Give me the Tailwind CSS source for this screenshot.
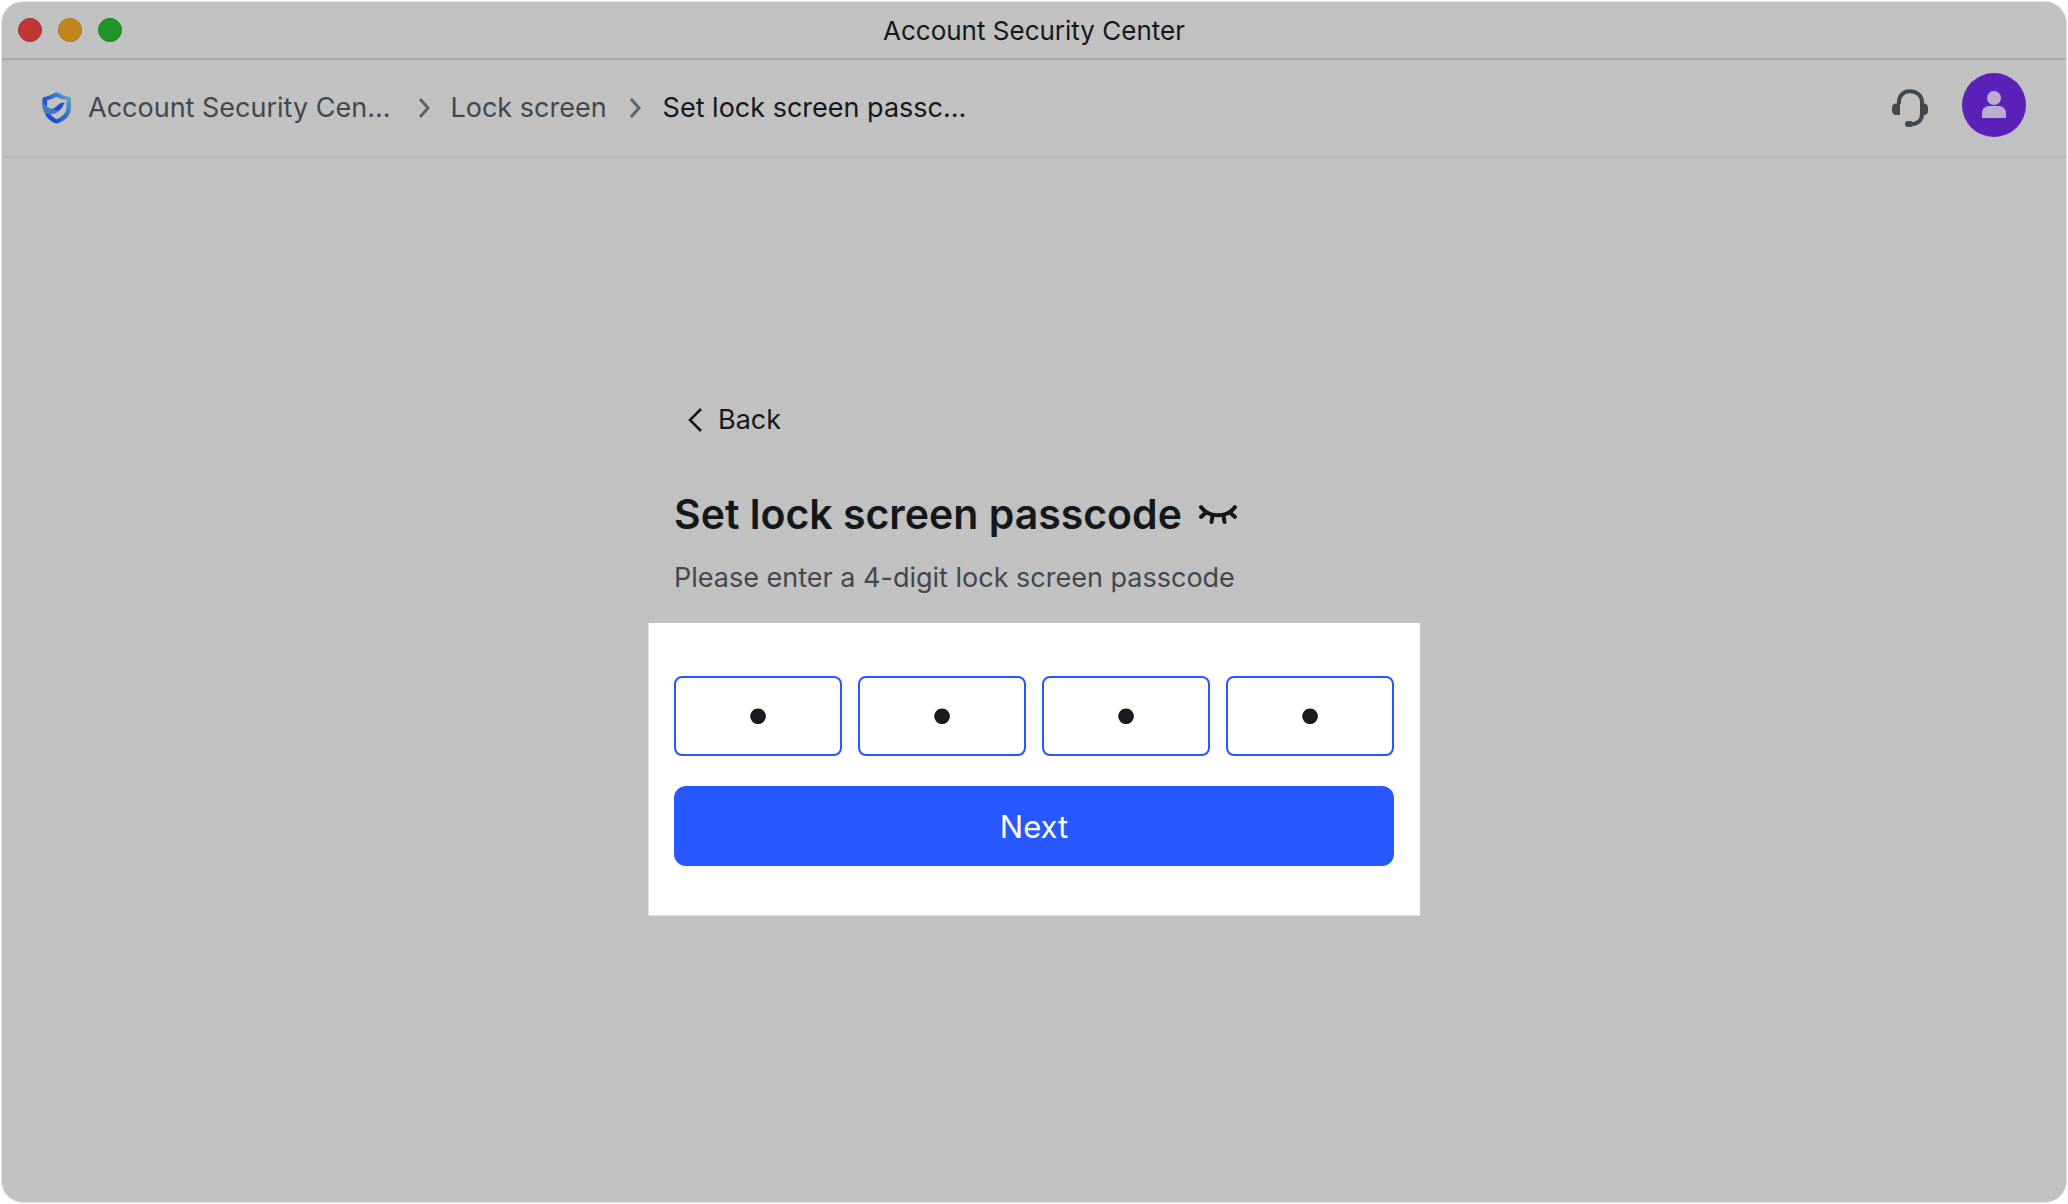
<!DOCTYPE html>
<html lang="en">
<head>
  <meta charset="UTF-8">
  <meta name="viewport" content="width=device-width, initial-scale=1.0">
  <title>Account Security Center</title>
  <script src="https://cdn.jsdelivr.net/npm/@tailwindcss/browser@4"></script>
</head>
<body class="bg-white font-['Inter','Liberation_Sans',sans-serif] text-[#15181b]">

  <!-- App window -->
  <div class="min-h-screen p-px">
    <div class="flex min-h-[calc(100vh-2px)] flex-col overflow-hidden rounded-[22px] border border-[#e4e4e4] bg-[#c1c1c1]">

      <!-- Title bar -->
      <div class="grid h-[58px] grid-cols-[1fr_auto_1fr] items-center border-b-2 border-[#ababab] px-4">
        <div class="flex gap-4">
          <span class="size-6 rounded-full border border-[#a92f30] bg-[#c13738]"></span>
          <span class="size-6 rounded-full border border-[#a5731a] bg-[#c1871d]"></span>
          <span class="size-6 rounded-full border border-[#1c7f22] bg-[#219427]"></span>
        </div>
        <h1 class="pt-0.5 text-[26px] leading-8">Account Security Center</h1>
      </div>

      <!-- Breadcrumb header -->
      <header class="flex h-[98px] items-center justify-between border-b-2 border-[#b8b8b8] px-10">
        <nav aria-label="Breadcrumb" class="flex items-center text-[27px] leading-9 text-[#42474d]">
          <a href="#" class="flex items-center gap-4">
            <svg class="h-8 w-[30px]" viewBox="0 0 30 32" fill="none">
              <defs>
                <linearGradient id="rim" x1="4" y1="8" x2="26" y2="8" gradientUnits="userSpaceOnUse">
                  <stop stop-color="#2355cf"/>
                  <stop offset="1" stop-color="#5aa3c4"/>
                </linearGradient>
                <linearGradient id="side" x1="28" y1="6" x2="11" y2="26" gradientUnits="userSpaceOnUse">
                  <stop stop-color="#5aa3c4"/>
                  <stop offset="1" stop-color="#1d4fcb"/>
                </linearGradient>
              </defs>
              <path d="M29 5V15.500C29 23 24 28 16.500 31Q14.500 31.900 12.500 31C7.500 28.500 4.500 25.500 2.500 21.500L8 21.500C9.500 24 11.500 25.700 14.500 27.200C21 24.500 24.500 20.500 24.500 15V8Z" fill="url(#side)"/>
              <path d="M0.500 14V6.800Q0.500 5.500 1.800 5.200C6 4.300 9.500 3 12.500 1Q14.500 0 16.500 1C20 3 23.500 4.300 27.500 5Q29 5.300 29 6.800V10L24.500 8.200C20.500 7.500 17.500 6.500 14.500 5C11.500 6.500 8.500 7.500 5 8.200V14Z" fill="url(#rim)"/>
              <path d="M0.500 9.500C4 15 8.500 17.500 13 16.500C16 13 18.500 10.500 22.500 11C20 14 18.500 20.500 12 21.800C7 22.700 3 22 2 20Q0.500 17 0.500 14Z" fill="#4878c8"/>
              <path d="M10.500 17C15 15.500 16.500 9.800 22.800 10.800C20.500 13.500 20 18.500 15 19C13 19 11.500 18.200 10.500 17Z" fill="#1d4fcb"/>
            </svg>
            <span>Account Security Cen...</span>
          </a>
          <svg class="mr-3 ml-5 h-6 w-7" viewBox="0 0 28 24" fill="none" stroke="#5c6269" stroke-width="3"><path d="M10 3L18 12L10 21"/></svg>
          <a href="#">Lock screen</a>
          <svg class="mx-3.5 h-6 w-7" viewBox="0 0 28 24" fill="none" stroke="#5c6269" stroke-width="3"><path d="M10 3L18 12L10 21"/></svg>
          <span aria-current="page" class="text-[#15181b]">Set lock screen passc...</span>
        </nav>
        <div class="flex items-center gap-8">
          <button type="button" aria-label="Customer support">
            <svg class="h-10 w-10" viewBox="0 0 40 40" fill="none">
              <path d="M9 16V14C9 7.500 13.500 3.300 20 3.300S32 7.500 32 14V26C32 33 27 36.500 19 36.500" stroke="#42474d" stroke-width="4"/>
              <path d="M10 15.500V27H6C3.500 27 2 25 2 23V20C2 17.500 3.500 15.500 6 15.500Z" fill="#42474d"/>
              <path d="M30 15.500H34C36.500 15.500 38 17.500 38 20V23C38 25 36.500 27 34 27H30Z" fill="#42474d"/>
              <rect x="15" y="33" width="8" height="6" rx="3" fill="#42474d"/>
            </svg>
          </button>
          <button type="button" aria-label="Profile" class="mb-1.5 flex size-16 items-center justify-center rounded-full bg-[#5b21b9]">
            <svg class="h-7 w-6" viewBox="0 0 24 28" fill="#b9add0">
              <circle cx="12" cy="7" r="7"/>
              <path d="M0 27V22C0 18 3 15 7 15H17C21 15 24 18 24 22V26C24 27 24 27 23 27Z"/>
            </svg>
          </button>
        </div>
      </header>

      <!-- Passcode form -->
      <main class="flex flex-col items-center pt-60">
        <div class="w-full max-w-[772px]">
          <div class="px-[26px]">
            <button type="button" class="flex items-center gap-3 pl-3 text-[27px] leading-11">
              <svg class="h-7 w-5" viewBox="0 0 20 28" fill="none" stroke="#15181b" stroke-width="2.500"><path d="M15 3L4 14L15 25"/></svg>
              Back
            </button>
            <div class="mt-11 flex items-center gap-4">
              <h2 id="passcode-title" class="text-[41px] leading-14 font-semibold">Set lock screen passcode</h2>
              <button type="button" aria-label="Show passcode">
                <svg class="h-10 w-10" viewBox="0 0 40 40" fill="none" stroke="#15181b" stroke-width="4" stroke-linecap="round">
                  <path d="M3 13C11 24 29 24 37 13"/>
                  <path d="M8 18.500L3 23M32 18.500L37 23M14.500 22L13.500 28M25.500 22L26.500 28"/>
                </svg>
              </button>
            </div>
            <p class="mt-[18px] text-[27px] leading-9 text-[#42474d]">Please enter a 4-digit lock screen passcode</p>
          </div>

          <form aria-labelledby="passcode-title" class="mt-[27px] border-b border-l border-[#dedede] bg-white pt-[53px] pr-[26px] pb-[49px] pl-[25px]">
            <div class="grid grid-cols-4 gap-4">
              <input type="password" maxlength="1" value="1" aria-label="Digit 1" class="h-20 w-full rounded-lg border-2 border-[#2757ff] pb-1.5 text-center text-[50px] text-[#1a1b1e]">
              <input type="password" maxlength="1" value="2" aria-label="Digit 2" class="h-20 w-full rounded-lg border-2 border-[#2757ff] pb-1.5 text-center text-[50px] text-[#1a1b1e]">
              <input type="password" maxlength="1" value="3" aria-label="Digit 3" class="h-20 w-full rounded-lg border-2 border-[#2757ff] pb-1.5 text-center text-[50px] text-[#1a1b1e]">
              <input type="password" maxlength="1" value="4" aria-label="Digit 4" class="h-20 w-full rounded-lg border-2 border-[#2757ff] pb-1.5 text-center text-[50px] text-[#1a1b1e]">
            </div>
            <button type="submit" class="mt-[30px] h-20 w-full rounded-xl bg-[#2757ff] pt-0.5 text-[31px] text-white">Next</button>
          </form>
        </div>
      </main>

    </div>
  </div>

</body>
</html>
